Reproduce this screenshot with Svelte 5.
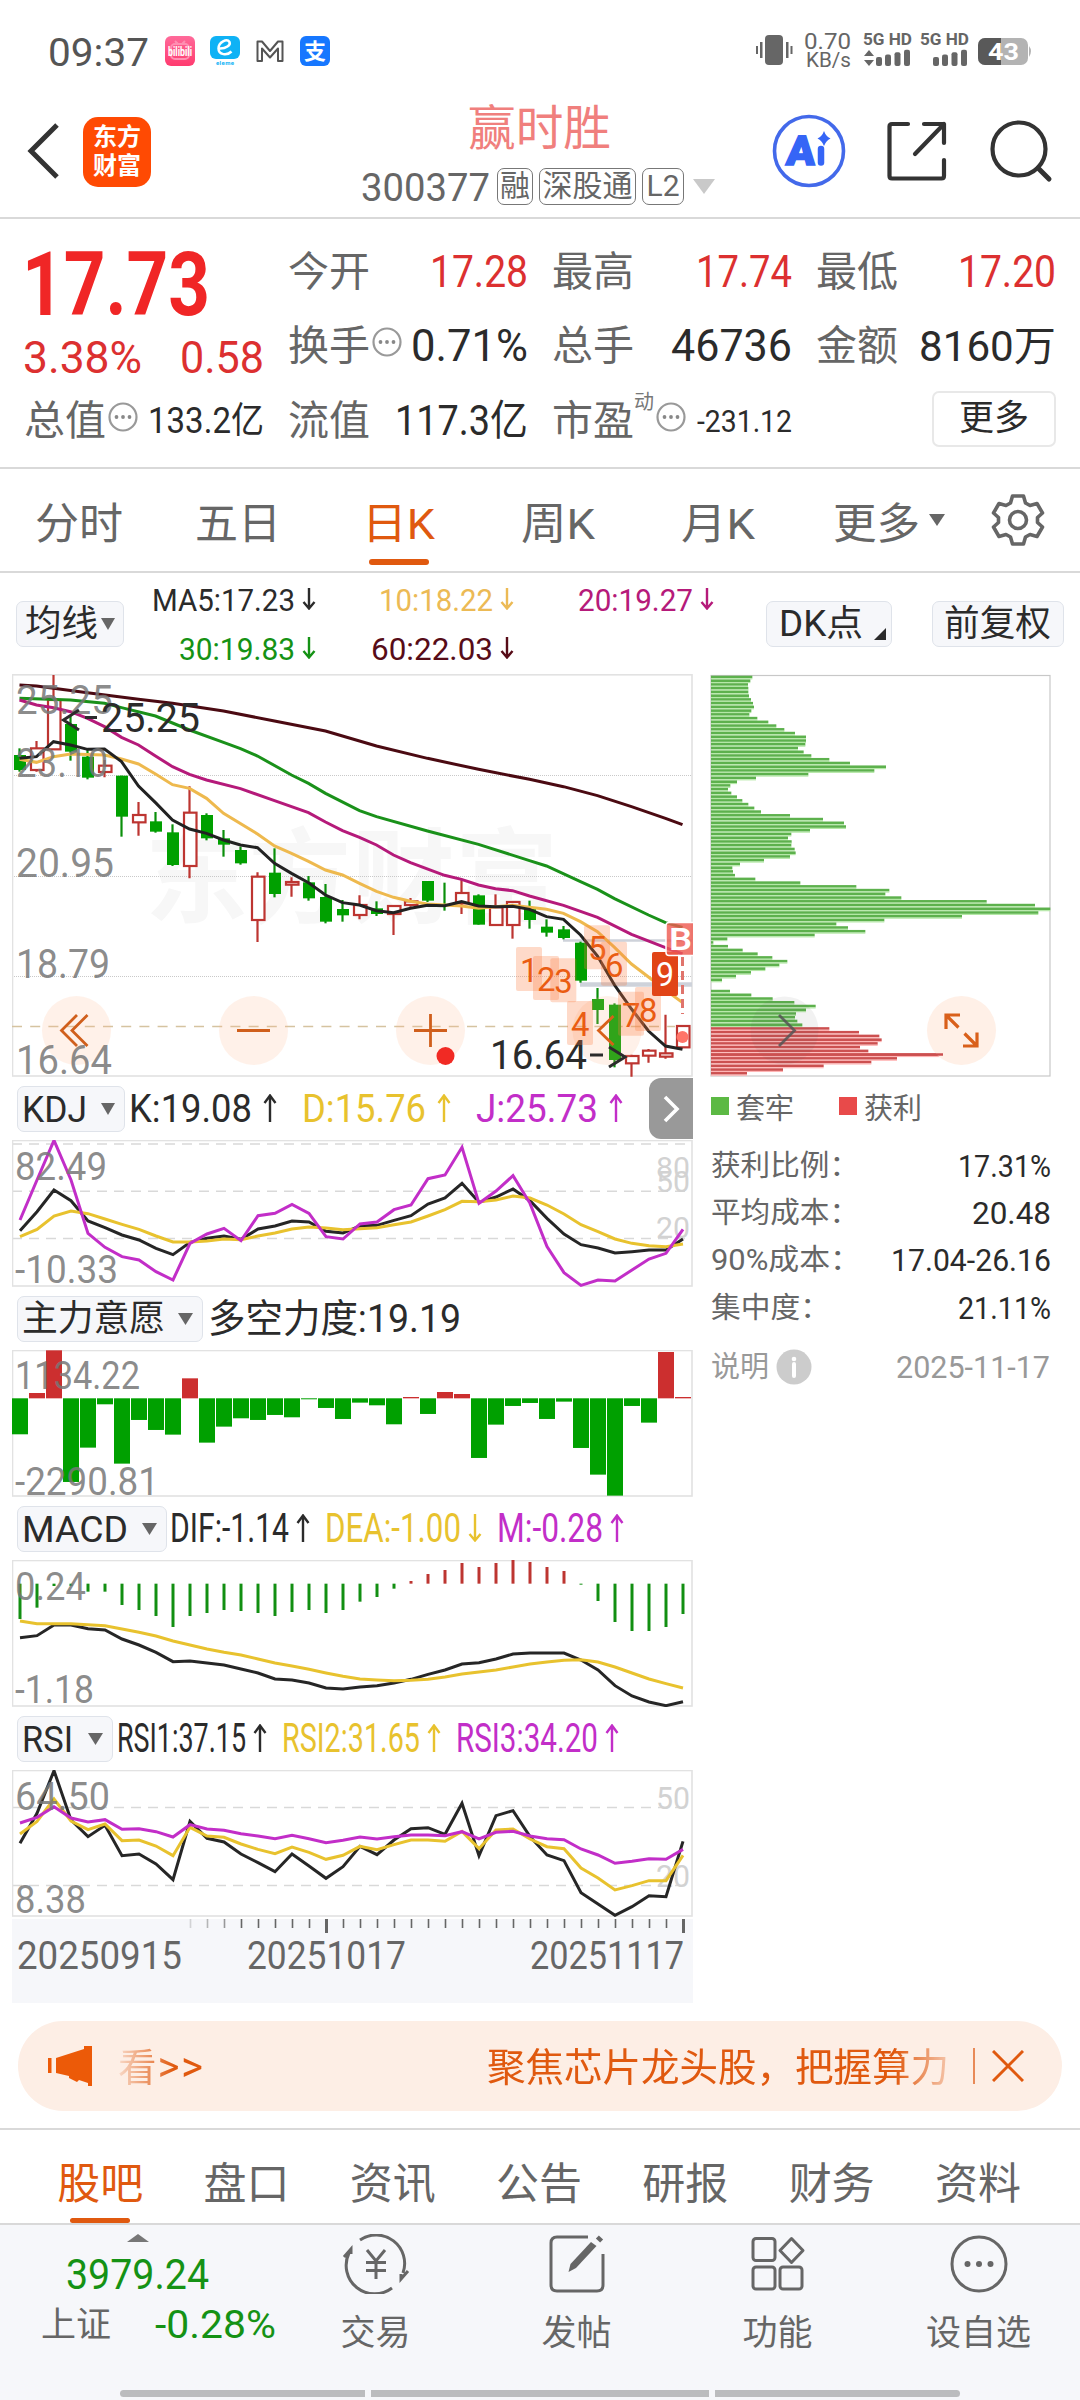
<script lang="ts">
  // Candles: [open/close top, open/close bottom, high, low, up?] in plot thirds
  const candles = [
    [285, 330, 265, 335, 0], [265, 330, 243, 335, 1], [120, 268, 45, 268, 1], [192, 275, 165, 302, 0],
    [290, 353, 270, 358, 0], [317, 336, 300, 352, 1], [347, 470, 347, 530, 0], [465, 487, 426, 527, 1],
    [484, 515, 456, 518, 0], [517, 615, 493, 618, 0], [458, 618, 379, 655, 1], [465, 535, 460, 541, 0],
    [535, 554, 510, 590, 0], [570, 610, 560, 614, 0], [650, 780, 637, 846, 1], [638, 702, 565, 712, 0],
    [666, 674, 652, 710, 1], [667, 715, 648, 722, 0], [711, 785, 672, 790, 0], [747, 766, 720, 785, 0],
    [735, 765, 706, 778, 1], [745, 762, 724, 768, 0], [738, 762, 735, 825, 1], [724, 735, 714, 740, 1],
    [663, 722, 663, 726, 0], [735, 738, 668, 752, 0], [699, 730, 660, 762, 1], [706, 794, 703, 794, 0],
    [742, 795, 703, 795, 1], [726, 795, 726, 836, 1], [745, 780, 722, 806, 0], [800, 818, 778, 830, 0],
    [808, 834, 798, 838, 0], [848, 962, 845, 968, 0], [1017, 1050, 984, 1092, 0], [1034, 1200, 1030, 1222, 0],
    [1188, 1210, 1184, 1250, 1], [1172, 1187, 1167, 1208, 1], [1180, 1190, 1064, 1196, 1], [1098, 1162, 1098, 1162, 1]
  ];

  // Moving averages: [index, y] pairs, same scale as the candles
  const averages = [
    { color: '#4b0a12', pts: [0, 75, 1, 78, 4, 98, 7, 118, 9, 130, 12, 153, 15, 183, 18, 213, 21, 258, 24, 295, 27, 328, 30, 358, 32, 380, 34, 407, 36, 440, 38, 475, 39, 494] },
    { color: '#1a911a', pts: [0, 115, 3, 120, 5, 130, 6, 143, 8, 168, 10, 210, 12, 247, 13, 266, 14, 288, 16, 345, 17, 370, 18, 400, 20, 452, 21, 470, 24, 513, 27, 553, 30, 602, 31, 618, 33, 665, 34, 688, 35, 716, 37, 765, 38, 788, 39, 802] },
    { color: '#b51a7a', pts: [0, 120, 1, 135, 2, 143, 3, 155, 4, 175, 5, 200, 6, 232, 7, 255, 8, 288, 9, 320, 10, 343, 11, 360, 13, 386, 15, 422, 17, 458, 18, 486, 19, 512, 20, 532, 21, 555, 22, 585, 23, 608, 25, 646, 26, 658, 27, 675, 28, 686, 29, 692, 30, 708, 32, 736, 34, 772, 36, 823, 38, 863, 39, 882] },
    { color: '#eeb94e', pts: [0, 298, 1, 307, 2, 290, 3, 282, 5, 285, 6, 297, 7, 312, 8, 342, 9, 374, 10, 385, 11, 415, 12, 460, 14, 522, 15, 558, 16, 580, 17, 604, 18, 630, 19, 645, 20, 670, 21, 694, 22, 712, 23, 724, 24, 732, 26, 738, 27, 745, 28, 740, 29, 736, 30, 742, 31, 748, 32, 760, 33, 785, 34, 815, 35, 862, 36, 912, 38, 990, 39, 1028] },
    { color: '#222', pts: [0, 295, 1, 290, 2, 245, 3, 255, 4, 268, 5, 267, 6, 305, 7, 378, 8, 428, 9, 480, 10, 507, 11, 520, 12, 540, 13, 555, 14, 563, 15, 610, 16, 640, 17, 668, 18, 705, 19, 728, 20, 735, 21, 752, 22, 758, 23, 745, 24, 736, 25, 737, 26, 725, 27, 738, 28, 740, 29, 739, 30, 748, 31, 770, 32, 778, 33, 825, 34, 888, 35, 975, 36, 1047, 37, 1113, 38, 1158, 39, 1168] }
  ];

  const kdj = [
    { color: '#262626', ys: [482, 425, 360, 392, 453, 473, 495, 510, 535, 554, 517, 505, 498, 508, 477, 468, 453, 456, 484, 489, 468, 466, 451, 437, 402, 384, 340, 397, 381, 357, 392, 445, 492, 524, 534, 549, 545, 540, 540, 507] },
    { color: '#e8c22e', ys: [500, 478, 438, 423, 431, 447, 463, 478, 498, 516, 516, 513, 507, 509, 498, 489, 477, 471, 474, 479, 476, 473, 464, 456, 438, 419, 394, 395, 390, 378, 384, 405, 432, 464, 485, 507, 520, 527, 530, 522] },
    { color: '#c22ec8', ys: [450, 330, 211, 330, 490, 532, 560, 570, 605, 630, 520, 492, 475, 512, 437, 430, 403, 430, 500, 507, 462, 456, 419, 405, 326, 315, 232, 400, 363, 317, 400, 530, 608, 646, 630, 633, 600, 567, 550, 478] }
  ];
  const force = [433, 309, 181, 576, 473, 343, 521, 390, 420, 434, 265, 458, 410, 385, 390, 375, 382, 328, 354, 387, 338, 346, 403, 321, 372, 306, 312, 504, 404, 348, 339, 387, 335, 474, 554, 617, 348, 398, 186, 321];
  const macdBars = [357, 323, 258, 258, 275, 275, 315, 330, 348, 381, 348, 339, 330, 333, 339, 348, 336, 330, 339, 330, 305, 291, 266, 243, 222, 210, 189, 201, 189, 180, 186, 201, 213, 254, 303, 366, 393, 393, 381, 342];
  const macd = [
    { color: '#262626', ys: [413, 407, 375, 375, 386, 390, 417, 435, 457, 485, 483, 489, 495, 507, 519, 537, 540, 549, 564, 567, 561, 557, 549, 538, 523, 510, 492, 488, 477, 462, 459, 459, 459, 480, 510, 557, 588, 606, 617, 605] },
    { color: '#e8c22e', ys: [363, 371, 371, 371, 374, 377, 387, 397, 408, 423, 435, 447, 457, 465, 477, 489, 498, 508, 519, 529, 537, 540, 542, 541, 538, 531, 522, 516, 510, 501, 492, 486, 481, 479, 486, 501, 519, 537, 551, 564] }
  ];
  const rsi = [
    { color: '#262626', ys: [310, 220, 92, 240, 290, 256, 347, 342, 372, 419, 244, 295, 306, 342, 368, 395, 342, 378, 415, 380, 319, 344, 300, 266, 263, 283, 190, 347, 227, 212, 290, 345, 362, 458, 492, 526, 500, 467, 470, 304] },
    { color: '#e8c22e', ys: [282, 244, 177, 243, 269, 252, 302, 300, 318, 347, 262, 288, 292, 312, 328, 341, 321, 337, 358, 346, 319, 329, 314, 300, 300, 304, 274, 326, 270, 267, 297, 320, 326, 384, 414, 450, 437, 422, 422, 346] },
    { color: '#c22ec8', ys: [249, 232, 200, 234, 246, 239, 268, 266, 275, 291, 254, 267, 271, 281, 288, 296, 286, 296, 308, 301, 291, 297, 290, 285, 285, 287, 275, 297, 277, 274, 288, 296, 299, 327, 345, 370, 364, 356, 358, 328] }
  ];

  // Cost distribution, one bar per price level; from CHIP_SPLIT on they are in profit
  const CHIP_SPLIT = 94;
  const chips = [
    186, 180, 173, 174, 174, 176, 182, 188, 191, 183, 177, 201, 234, 258, 282, 314, 347, 347, 345, 323, 340, 363, 417, 479, 587, 552,
    354, 197, 140, 120, 113, 123, 140, 156, 174, 192, 212, 299, 398, 461, 467, 359, 303, 293, 304, 303, 313, 316, 299, 221, 149, 126,
    128, 134, 195, 330, 498, 597, 585, 633, 889, 1034, 1080, 1044, 815, 582, 438, 473, 525, 373, 111, 69, 113, 157, 202, 246, 291,
    267, 225, 182, 137, 95, 62, 62, 119, 183, 247, 312, 376, 347, 317, 314, 321, 336,
    417, 506, 567, 574, 562, 509, 534, 759, 620, 543, 400, 278, 170
  ];

  const signals = [
    ['1', 498, 861], ['2', 549, 888], ['3', 601, 895], ['4', 651, 1023],
    ['5', 702, 796], ['6', 753, 845], ['7', 804, 995], ['8', 855, 981]
  ] as [string, number, number][];

  const periods = [
    { name: '分时', left: 35, w: 88 },
    { name: '五日', left: 195, w: 86 },
    { name: '日K', left: 362, w: 73, active: true },
    { name: '周K', left: 521, w: 74 },
    { name: '月K', left: 681, w: 74 },
    { name: '更多', left: 833, w: 87 }
  ];
  const sections = ['股吧', '盘口', '资讯', '公告', '研报', '财务', '资料'];
  const costs: [string, number, string, number][] = [
    ['获利比例：', 148, '17.31%', 93],
    ['平均成本：', 148, '20.48', 79],
    ['90%成本：', 150, '17.04-26.16', 160],
    ['集中度：', 119, '21.11%', 93]
  ];

  const cx = (i: number) => 19.5 + i * 17;
  const ky = (v: number) => 660 + v / 3;

  function pairs(p: number[]) {
    let out = '';
    for (let i = 0; i < p.length; i += 2) out += `${cx(p[i])},${ky(p[i + 1])} `;
    return out;
  }
  function line(ys: number[], base: number) {
    return ys.map((v, i) => `${cx(i) + 0.5},${base + v / 3}`).join(' ');
  }
</script>

<!-- text set to a fixed advance width, so the columns line up -->
{#snippet t(text: string, w: number, size: number, cls = '')}
  <svg class="t {cls}" width={w} height={Math.round(size * 1.2)}>
    <text x="0" y={Math.round(size * 1.2) / 2 + size * 0.36} font-size={size} textLength={w} lengthAdjust="spacingAndGlyphs">{text}</text>
  </svg>
{/snippet}

{#snippet arrow(up: boolean, h: number, cls: string)}
  <svg class="arrow {cls}" width="14" height={h} viewBox="0 0 14 {h}">
    {#if up}
      <path d="M7 {h}V2M1.5 9L7 1.5L12.500 9" />
    {:else}
      <path d="M7 0V{h - 2}M1.5 {h - 8}L7 {h - 1.5}L12.500 {h - 8}" />
    {/if}
  </svg>
{/snippet}

{#snippet caret(w: number, h: number)}
  <svg class="caret" width={w} height={h} viewBox="0 0 10 10" preserveAspectRatio="none"><path d="M0 0H10L5 10Z" /></svg>
{/snippet}

{#snippet more()}
  <svg class="more-dot" width="30" height="30" viewBox="0 0 30 30">
    <circle cx="15" cy="15" r="13.500" /><g class="dots"><circle cx="8.500" cy="15" r="1.900" /><circle cx="15" cy="15" r="1.900" /><circle cx="21.500" cy="15" r="1.900" /></g>
  </svg>
{/snippet}

{#snippet axis(text: string, x: number, y: number, w: number, size = 39)}
  <text class="axis" {x} {y} font-size={size} textLength={w} lengthAdjust="spacingAndGlyphs">{text}</text>
{/snippet}

<div class="page">
  <div class="status">
    {@render t('09:37', 101, 39, 'mid')}
    <svg class="apps" width="168" height="34" viewBox="163 34 168 34">
      <defs>
        <linearGradient id="pink" x1="0" y1="0" x2="0" y2="1"><stop offset="0" stop-color="#ff6a9a" /><stop offset="1" stop-color="#ff3b6f" /></linearGradient>
      </defs>
      <rect x="165" y="36" width="30" height="30" rx="6" fill="url(#pink)" />
      <rect x="171" y="44" width="18" height="15" rx="4" fill="none" stroke="#ff8fb2" stroke-width="2" /><path d="M175 41l3 3M185 41l-3 3" stroke="#ff8fb2" stroke-width="2" />
      <text x="168" y="56" font-size="12" font-weight="700" fill="#fff" textLength="24" lengthAdjust="spacingAndGlyphs">bilibili</text>
      <rect x="210" y="36" width="30" height="23" rx="6" fill="#0fb2f5" />
      <path d="M219 48.500C226 49 231 45 229.500 42C227 38 218.500 42 218.500 48.500C218.500 55 227 56 231.500 51.500" fill="none" stroke="#fff" stroke-width="2.500" />
      <text x="216" y="65" font-size="6" font-weight="700" fill="#0fb2f5" textLength="18">eleme</text>
      <path d="M257.500 61V41.500H262L270 51L278 41.500H282.500V61H278V48.500L270 57.500L262 48.500V61Z" fill="none" stroke="#555" stroke-width="2" stroke-linejoin="round" />
      <rect x="300" y="36" width="30" height="30" rx="6" fill="#1677ff" />
      <text x="304" y="59" font-size="22" font-weight="700" fill="#fff">支</text>
    </svg>
    <svg class="system" width="280" height="44" viewBox="755 30 280 44">
      <g fill="#666">
        <rect x="765" y="36" width="18" height="30" rx="4" /><rect x="760" y="43" width="2.500" height="16" /><rect x="756" y="47" width="2" height="8" /><rect x="786" y="43" width="2.500" height="16" /><rect x="790.500" y="47" width="2" height="8" />
        <text x="804" y="50" font-size="22" textLength="47" lengthAdjust="spacingAndGlyphs">0.70</text>
        <text x="806" y="68" font-size="20" textLength="45" lengthAdjust="spacingAndGlyphs">KB/s</text>
        <text x="863" y="46" font-size="17" font-weight="700" textLength="49" lengthAdjust="spacingAndGlyphs">5G HD</text>
        <text x="920" y="46" font-size="17" font-weight="700" textLength="49" lengthAdjust="spacingAndGlyphs">5G HD</text>
        <path d="M864 57L869 51L874 57ZM864 61H874L869 67Z" />
        {#each [876, 885, 894.5, 904] as x, i}
          <rect {x} y={58 - i * 2.4} width="6" height={9 + i * 2.4} rx="2" />
          <rect x={x + 57} y={58 - i * 2.4} width="6" height={9 + i * 2.4} rx="2" />
        {/each}
      </g>
      <rect x="978" y="39" width="50" height="27" rx="7" fill="#b3b3b3" /><path d="M985 39H1001V66H985A7 7 0 0 1 978 59V46A7 7 0 0 1 985 39Z" fill="#595959" /><path d="M1029 47Q1033 52 1029 58Z" fill="#b3b3b3" />
      <text x="988" y="61" font-size="24" font-weight="700" fill="#fff" textLength="31" lengthAdjust="spacingAndGlyphs">43</text>
    </svg>
  </div>

  <header>
    <svg class="back" width="36" height="60" viewBox="0 0 36 60"><path d="M31 4L5 30L31 56" /></svg>
    <div class="logo"><span>东方</span><span>财富</span></div>
    <div class="title">
      {@render t('赢时胜', 143, 48, 'rose')}
      <div class="code">
        {@render t('300377', 129, 39, 'grey')}
        <span class="tag" style:width="36px">融</span>
        <span class="tag" style:width="97px">深股通</span>
        <span class="tag" style:width="42px">L2</span>
        <span class="pale">{@render caret(22, 15)}</span>
      </div>
    </div>
    <svg class="tools" width="284" height="80" viewBox="770 111 284 80">
      <circle cx="809" cy="151" r="34.500" fill="none" stroke="#4369ea" stroke-width="3.600" />
      <text x="786" y="165" font-size="41" font-weight="900" fill="#3565f6" stroke="#3565f6" stroke-width="1.500" textLength="29" lengthAdjust="spacingAndGlyphs" transform="skewX(-4) translate(11 0)">A</text>
      <path d="M821 149V162.500" stroke="#3565f6" stroke-width="6.500" stroke-linecap="round" /><path d="M824 131Q826 136.500 830.500 138.500Q826 140.500 824 146Q822 140.500 817.500 138.500Q822 136.500 824 131Z" fill="#3565f6" />
      <g fill="none" stroke="#333" stroke-width="4.200" stroke-linecap="round" stroke-linejoin="round">
        <path d="M908 124H892Q889.500 124 889.500 126.500V176Q889.500 178.500 892 178.500H941.500Q944 178.500 944 176V160" /><path d="M924 124H944V143M944 124L915 154" />
        <circle cx="1019" cy="149" r="26.500" /><path d="M1038 168L1049 179" stroke-width="5" />
      </g>
    </svg>
  </header>

  <section class="quote">
    <div class="price">
      {@render t('17.73', 188, 89, 'red big')}
      <div class="pair">{@render t('3.38%', 119, 44, 'red2')}{@render t('0.58', 84, 44, 'red2')}</div>
    </div>
    <div class="cell">{@render t('今开', 82, 41, 'grey')}{@render t('17.28', 98, 44, 'red2')}</div>
    <div class="cell">{@render t('最高', 82, 41, 'grey')}{@render t('17.74', 96, 44, 'red2')}</div>
    <div class="cell">{@render t('最低', 82, 41, 'grey')}{@render t('17.20', 98, 44, 'red2')}</div>
    <div class="cell"><span class="lab">{@render t('换手', 82, 41, 'grey')}{@render more()}</span>{@render t('0.71%', 117, 44)}</div>
    <div class="cell">{@render t('总手', 82, 41, 'grey')}{@render t('46736', 121, 44)}</div>
    <div class="cell">{@render t('金额', 82, 41, 'grey')}{@render t('8160万', 137, 42)}</div>
    <div class="cell"><span class="lab">{@render t('总值', 82, 41, 'grey')}{@render more()}</span>{@render t('133.2亿', 116, 36)}</div>
    <div class="cell">{@render t('流值', 82, 41, 'grey')}{@render t('117.3亿', 133, 42)}</div>
    <div class="cell"><span class="lab">{@render t('市盈', 82, 41, 'grey')}<sup>动</sup>{@render more()}</span>{@render t('-231.12', 95, 31)}</div>
    <div class="cell end"><button class="more">更多</button></div>
  </section>

  <nav class="periods">
    {#each periods as p, i}
      <div class="period" class:active={p.active} style:margin-left="{i ? p.left - periods[i - 1].left - periods[i - 1].w : p.left}px">
        {@render t(p.name, p.w, 43)}
      </div>
    {/each}
    <span class="drop">{@render caret(16, 12)}</span>
    <svg class="gear" width="54" height="54" viewBox="-27 -27 54 54">
      <path d="M-5.500 -24H5.500L7.500 -17L12 -14.500L19 -16.500L24.500 -7L19.500 -2.500V2.500L24.500 7L19 16.500L12 14.500L7.500 17L5.500 24H-5.500L-7.500 17L-12 14.500L-19 16.500L-24.500 7L-19.500 2.500V-2.500L-24.500 -7L-19 -16.500L-12 -14.500L-7.500 -17Z" /><circle r="8.500" />
    </svg>
  </nav>

  <section class="averages">
    <button class="chip" style:width="108px">{@render t('均线', 73, 36)}{@render caret(14, 12)}</button>
    <div class="legend">
      <span>{@render t('MA5:17.23', 143, 31)}{@render arrow(false, 22, 'ink')}</span>
      <span>{@render t('10:18.22', 114, 31, 'amber')}{@render arrow(false, 22, 'amber')}</span>
      <span>{@render t('20:19.27', 115, 31, 'plum')}{@render arrow(false, 22, 'plum')}</span>
      <span>{@render t('30:19.83', 116, 31, 'green')}{@render arrow(false, 22, 'green')}</span>
      <span>{@render t('60:22.03', 122, 31, 'wine')}{@render arrow(false, 22, 'wine')}</span>
    </div>
    <button class="chip dk" style:width="126px">{@render t('DK点', 84, 36)}<i></i></button>
    <button class="chip" style:width="132px">{@render t('前复权', 107, 36)}</button>
  </section>

  <main>
    <div class="charts">
      <svg class="plot" width="681" height="403" viewBox="12 674 681 403">
        <text class="mark" x="145" y="915" font-size="103" textLength="413">东方财富</text>
        <g class="dotted"><path d="M12 775.500H692M12 876.500H692M12 976.500H692" /></g>
        <rect class="frame" x="12.500" y="674.800" width="679.500" height="401.200" />
        <path d="M12 1026.500H675" fill="none" stroke="#d5c3a0" stroke-width="1.600" stroke-dasharray="10 8.200" />
        <path d="M563 940.500H692" stroke="#ced2da" stroke-width="2.500" /><path d="M580 984.500H692" stroke="#ced2da" stroke-width="4.500" />
        {#each candles as [top, bottom, high, low, up], i}
          {#if up}
            <path d="M{cx(i)} {ky(high)}V{ky(top)}M{cx(i)} {ky(bottom)}V{ky(low)}" stroke="#bd3531" stroke-width="2.200" />
            <rect x={cx(i) - 5.5} y={ky(top)} width="12.500" height={(bottom - top) / 3} fill="#fff" stroke="#bd3531" stroke-width="2.200" />
          {:else}
            <path d="M{cx(i)} {ky(high)}V{ky(low)}" stroke="#0a8f0a" stroke-width="2.200" />
            <rect x={cx(i) - 5.5} y={ky(top)} width="12" height={(bottom - top) / 3} fill="#00a000" />
          {/if}
        {/each}
        {#each averages as a}
          <polyline points={pairs(a.pts)} fill="none" stroke={a.color} stroke-width="3" />
        {/each}
        {@render axis('25.25', 16, 714, 97, 40)}
        {@render axis('23.10', 16, 777, 92, 40)}
        {@render axis('20.95', 16, 877, 98, 40)}
        {@render axis('18.79', 16, 978, 94, 40)}
        <g fill="#ffb48a" fill-opacity="0.190"><circle cx="76.500" cy="1030.500" r="34.500" /><circle cx="253.500" cy="1030.500" r="34.500" /><circle cx="430.500" cy="1030.500" r="34.500" /><circle cx="607" cy="1030.500" r="34.500" /></g>
        {@render axis('16.64', 16, 1074, 96, 40)}
        <path d="M77 1015L61.500 1030.500L77 1046M87.500 1015L72 1030.500L87.500 1046M237 1030.500H270M414 1030.500H447M430.500 1014V1047" fill="none" stroke="#d05f1c" stroke-width="2.800" />
        <circle cx="445.500" cy="1056" r="9" fill="#f12a24" />
        <g class="callout">
          <path d="M79 710L63.500 720L79 730M85 717.500H97M609 1047L625 1057L609 1067M590 1055H603" />
          <text x="101" y="732" font-size="40" textLength="99" lengthAdjust="spacingAndGlyphs">25.25</text>
          <text x="490" y="1069" font-size="40" textLength="97" lengthAdjust="spacingAndGlyphs">16.64</text>
        </g>
        {#each signals as [n, x, y]}
          <rect x={350 + x / 3} y={ky(y)} width="26" height="44" rx="2" fill="#fb7a3c" fill-opacity="0.280" />
          <text x={354 + x / 3} y={ky(y) + 35} font-size="34" fill="#ea5c12" textLength="18.500" lengthAdjust="spacingAndGlyphs">{n}</text>
        {/each}
        <path d="M613.500 1016L598.500 1030.500L613.500 1045" fill="none" stroke="#d86018" stroke-width="2.800" />
        <rect x="652" y="952" width="26" height="44" rx="2" fill="#e14417" /><text x="656" y="986" font-size="34" fill="#fff" textLength="18" lengthAdjust="spacingAndGlyphs">9</text>
        <path d="M682.500 957V1014" stroke="#e0746c" stroke-width="3" stroke-dasharray="9 5" /><circle cx="682.500" cy="1037" r="6" fill="#ff7468" />
        <rect x="666" y="922.500" width="30" height="33" rx="3" fill="#ee5b52" fill-opacity="0.820" stroke="#fff" stroke-width="1.500" /><text x="669" y="950" font-size="31" font-weight="600" fill="#fff" textLength="23" lengthAdjust="spacingAndGlyphs">B</text>
      </svg>

      <div class="indicator wide">
        <button class="chip" style:width="108px">{@render t('KDJ', 65, 37)}{@render caret(14, 12)}</button>
        <span style:margin-left="4px">{@render t('K:19.08', 123, 39)}{@render arrow(true, 28, 'ink')}</span>
        <span>{@render t('D:15.76', 124, 39, 'yellow')}{@render arrow(true, 28, 'yellow')}</span>
        <span>{@render t('J:25.73', 122, 39, 'purple')}{@render arrow(true, 28, 'purple')}</span>
        <div class="expand"><svg width="18" height="28" viewBox="0 0 18 28"><path d="M3 2L15 14L3 26" /></svg></div>
      </div>
      <svg class="plot" width="681" height="147" viewBox="12 1140 681 147">
        <path class="dashed" d="M12 1144H692M12 1191.300H692M12 1238.500H692" />
        <rect class="frame" x="12.500" y="1140.500" width="679.500" height="145.500" />
        <g class="faint">
          <text x="656" y="1178" font-size="29" textLength="34" lengthAdjust="spacingAndGlyphs">80</text>
          <text x="656" y="1192" font-size="29" textLength="34" lengthAdjust="spacingAndGlyphs">50</text>
          <text x="656" y="1238" font-size="29" textLength="34" lengthAdjust="spacingAndGlyphs">20</text>
        </g>
        {#each kdj as l}<polyline points={line(l.ys, 1070)} fill="none" stroke={l.color} stroke-width="3" />{/each}
        {@render axis('82.49', 15, 1180, 92, 38)}
        {@render axis('-10.33', 15, 1283, 103, 38)}
      </svg>

      <div class="indicator">
        <button class="chip" style:width="186px">{@render t('主力意愿', 143, 36)}{@render caret(15, 12)}</button>
        <span style:margin-left="5px">{@render t('多空力度:19.19', 253, 39)}</span>
      </div>
      <svg class="plot" width="681" height="147" viewBox="12 1350 681 147">
        <rect class="frame" x="12.500" y="1350.500" width="679.500" height="145.500" />
        {#each force as v, i}
          <rect x={12 + i * 17} y={Math.min(1290 + v / 3, 1398.3)} width="16" height={Math.max(Math.abs(v - 325) / 3, 1)} fill={v < 325 ? '#cc2f2f' : '#00a000'} />
        {/each}
        {@render axis('1134.22', 15, 1389, 125, 38)}
        {@render axis('-2290.81', 15, 1495, 144, 38)}
      </svg>

      <div class="indicator">
        <button class="chip" style:width="150px">{@render t('MACD', 106, 37)}{@render caret(15, 12)}</button>
        <span style:margin-left="3px">{@render t('DIF:-1.14', 119, 40)}{@render arrow(true, 28, 'ink')}</span>
        <span>{@render t('DEA:-1.00', 136, 40, 'yellow')}{@render arrow(false, 28, 'yellow')}</span>
        <span>{@render t('M:-0.28', 106, 40, 'purple')}{@render arrow(true, 28, 'purple')}</span>
      </div>
      <svg class="plot" width="681" height="147" viewBox="12 1560 681 147">
        <rect class="frame" x="12.500" y="1560.500" width="679.500" height="145.500" />
        {#each macdBars as v, i}
          <path d="M{cx(i) + 0.5} {1500 + 251 / 3}V{1500 + v / 3}" stroke={v < 251 ? '#bd3531' : '#128f12'} stroke-width="3" />
        {/each}
        {#each macd as l}<polyline points={line(l.ys, 1500)} fill="none" stroke={l.color} stroke-width="3" />{/each}
        {@render axis('0.24', 15, 1600, 71, 38)}
        {@render axis('-1.18', 15, 1703, 79, 38)}
      </svg>

      <div class="indicator">
        <button class="chip" style:width="96px">{@render t('RSI', 51, 37)}{@render caret(15, 12)}</button>
        <span style:margin-left="4px">{@render t('RSI1:37.15', 129, 40)}{@render arrow(true, 28, 'ink')}</span>
        <span>{@render t('RSI2:31.65', 138, 40, 'yellow')}{@render arrow(true, 28, 'yellow')}</span>
        <span>{@render t('RSI3:34.20', 142, 40, 'purple')}{@render arrow(true, 28, 'purple')}</span>
      </div>
      <svg class="plot" width="681" height="147" viewBox="12 1770 681 147">
        <path class="dashed" d="M12 1807.500H692M12 1885.500H692" />
        <rect class="frame" x="12.500" y="1770.500" width="679.500" height="145.500" />
        <g class="faint">
          <text x="656" y="1809" font-size="31" textLength="34" lengthAdjust="spacingAndGlyphs">50</text>
          <text x="656" y="1887" font-size="31" textLength="34" lengthAdjust="spacingAndGlyphs">20</text>
        </g>
        {#each rsi as l}<polyline points={line(l.ys, 1740)} fill="none" stroke={l.color} stroke-width="3" />{/each}
        {@render axis('64.50', 15, 1810, 95, 38)}
        {@render axis('8.38', 15, 1913, 71, 38)}
      </svg>
      <svg class="plot days" width="681" height="84" viewBox="12 1919 681 84">
        {#each Array(30) as _, k}
          {@const i = k + 10}
          {@const major = i === 18 || i === 39}
          <path d="M{cx(i) + 1} 1919V{major ? 1933 : 1928}" stroke="#666" stroke-opacity={k < 3 ? 0.25 + k * 0.2 : 1} stroke-width={major ? 3 : 1.6} />
        {/each}
        <g fill="#666">
          <text x="17" y="1968.500" font-size="38" textLength="165" lengthAdjust="spacingAndGlyphs">20250915</text>
          <text x="247" y="1968.500" font-size="38" textLength="159" lengthAdjust="spacingAndGlyphs">20251017</text>
          <text x="530" y="1968.500" font-size="38" textLength="154" lengthAdjust="spacingAndGlyphs">20251117</text>
        </g>
      </svg>
    </div>

    <aside>
      <svg width="342" height="403" viewBox="710 674 342 403">
        <rect x="711" y="675.500" width="339" height="400.500" fill="none" stroke="#c8c8c8" stroke-width="1.200" />
        {#each chips as v, i}
          <rect x="711" y={675.7 + i * 3.739} width={(v - 62) / 3} height="2.600" fill={i < CHIP_SPLIT ? '#5db14d' : '#cc5050'} />
          <rect x="711" y={678.3 + i * 3.739} width={(v - 62) / 3} height="1.139" fill={i < CHIP_SPLIT ? '#b4e8a6' : '#ffb5b5'} />
        {/each}
        <circle cx="784.500" cy="1030.500" r="34" fill="#555" fill-opacity="0.080" /><path d="M779 1015L794.500 1030.500L779 1046" fill="none" stroke="#555" stroke-width="2.800" stroke-opacity="0.850" />
        <circle cx="961.500" cy="1030.500" r="34.500" fill="#fff0e7" />
        <path d="M711 1054.500H943" stroke="#cc5050" stroke-width="2.600" />
        <path d="M946 1029V1015H960M947 1016L958.500 1027.500M977 1032.500V1046H963M976 1045L964.500 1033.500" fill="none" stroke="#d9601b" stroke-width="3.200" />
      </svg>
      <div class="key"><i class="k1"></i><span>套牢</span><i class="k2"></i><span>获利</span></div>
      <dl>
        {#each costs as [name, nw, value, vw]}
          <div><dt>{@render t(name, nw, 29, 'grey')}</dt><dd>{@render t(value, vw, 31)}</dd></div>
        {/each}
      </dl>
      <div class="note">
        {@render t('说明', 58, 29, 'light')}
        <svg width="36" height="36" viewBox="0 0 36 36"><circle cx="18" cy="18" r="17.500" fill="#ccc" /><circle cx="18" cy="10" r="2.300" fill="#fff" /><path d="M18 15V27" stroke="#fff" stroke-width="4" stroke-linecap="round" /></svg>
        <span>{@render t('2025-11-17', 154, 31, 'light')}</span>
      </div>
    </aside>
  </main>

  <div class="banner">
    <svg width="46" height="42" viewBox="0 0 46 42"><path d="M1 13H4.500V28H1ZM9 13L37 4V1H45V41H41V38L32 35L30 37L22 33V31L9 28Z" fill="#ec5a08" /></svg>
    <div class="ticker"><span>看<b>&gt;&gt;</b></span><span>聚焦芯片龙头股，把握算力</span></div>
    <i></i>
    <svg width="32" height="32" viewBox="0 0 32 32"><path d="M1 1L31 31M31 1L1 31" stroke="#e0590f" stroke-width="3" /></svg>
  </div>

  <nav class="sections">
    {#each sections as s, i}
      <div class:active={i === 0}>{s}</div>
    {/each}
  </nav>

  <footer>
    <div class="dock">
      <div class="index">
        <svg width="22" height="8" viewBox="0 0 22 8"><path d="M0 8L11 0L22 8Z" fill="#777" /></svg>
        {@render t('3979.24', 143, 42, 'green')}
        <div>{@render t('上证', 70, 35, 'grey')}{@render t('-0.28%', 121, 39, 'green')}</div>
      </div>
      <div class="action">
        <svg width="70" height="60" viewBox="-35 -30 70 60">
          <path d="M-16 -24A28.500 28.500 0 0 1 27 9M16 24A28.500 28.500 0 0 1 -27 -11M-32 -7L-25 -15V-10M32 7L25 15V10" /><path d="M-9 -14L0 -3L9 -14M0 -3V15M-10 -1.500H10M-10 6.500H10" />
        </svg>
        <span>交易</span>
      </div>
      <div class="action">
        <svg width="70" height="60" viewBox="-35 -30 70 60">
          <path d="M11 -27H-20Q-26 -27 -26 -21V21Q-26 27 -20 27H20Q26 27 26 21V-10" /><path d="M-8.500 8L-6.500 0L14 -22L19.500 -18L-1 4Z" fill="#666" stroke="none" /><path d="M21 -23.500L24 -26.500" stroke-width="6" />
        </svg>
        <span>发帖</span>
      </div>
      <div class="action">
        <svg width="70" height="60" viewBox="-35 -30 70 60">
          <rect x="-25" y="-25.500" width="22" height="22" rx="3" /><rect x="-25" y="3" width="22" height="22" rx="3" /><rect x="2" y="3" width="22" height="22" rx="3" /><path d="M13.500 -25.500L25 -13.500L13.500 -1.500L2 -13.500Z" stroke-linejoin="round" />
        </svg>
        <span>功能</span>
      </div>
      <div class="action">
        <svg width="70" height="60" viewBox="-35 -30 70 60">
          <circle r="27" /><g class="dots"><circle cx="-11.500" r="3" /><circle r="3" /><circle cx="11.500" r="3" /></g>
        </svg>
        <span>设自选</span>
      </div>
    </div>
    <div class="gesture"><i></i><i></i><i></i></div>
  </footer>
</div>

<style>
  :global(body) {
    background: #fff;
  }
  .page {
    width: 1080px;
    height: 2400px;
    overflow: hidden;
    display: flex;
    flex-direction: column;
    font-family: Roboto, "Noto Sans CJK SC", sans-serif;
    color: #2b2b2b;
    --orange: #e0590f;
    --panel: #f6f7fa;
  }
  .page * {
    box-sizing: border-box;
  }
  svg {
    display: block;
    flex: none;
  }
  button {
    font: inherit;
    color: inherit;
    padding: 0;
  }
  .t {
    fill: #2b2b2b;
    overflow: visible;
  }
  .mid { fill: #555; }
  .grey { fill: #666; }
  .light { fill: #999; }
  .rose { fill: #f07f7d; }
  .red { fill: #f02626; }
  .red2 { fill: #dc3030; }
  .big { font-weight: 700; }
  .amber { fill: #ecba55; stroke: #ecba55; }
  .plum { fill: #b51a7a; stroke: #b51a7a; }
  .green { fill: #159215; stroke: #159215; }
  .wine { fill: #570c18; stroke: #570c18; }
  .yellow { fill: #e8c22e; stroke: #e8c22e; }
  .purple { fill: #c22ec8; stroke: #c22ec8; }
  .ink { stroke: #2b2b2b; }
  .t.amber, .t.plum, .t.green, .t.wine, .t.yellow, .t.purple { stroke: none; }
  .arrow path {
    fill: none;
    stroke-width: 2.4;
  }
  .caret { fill: #666; }
  .more-dot > circle {
    fill: none;
    stroke: #999;
    stroke-width: 2.2;
  }
  .more-dot .dots { fill: #888; }

  .status {
    height: 90px;
    display: flex;
    align-items: center;
    padding: 12px 45px 0 48px;
  }
  .apps { margin-left: 14px; }
  .system { margin-left: auto; }

  header {
    height: 129px;
    border-bottom: 2px solid #d9d9d9;
    display: flex;
    align-items: flex-start;
    padding: 0 26px 0 26px;
  }
  .back {
    margin-top: 31px;
    fill: none;
    stroke: #333;
    stroke-width: 5;
  }
  .logo {
    width: 68px;
    height: 70px;
    margin: 27px 0 0 21px;
    border-radius: 15px;
    background: #ff4a03;
    color: #fff;
    font-size: 24px;
    font-weight: 700;
    line-height: 29px;
    display: flex;
    flex-direction: column;
    align-items: center;
    justify-content: center;
  }
  .title {
    width: 354px;
    margin-left: 210px;
    display: flex;
    flex-direction: column;
    align-items: center;
    padding-top: 9px;
  }
  .title .rose { margin-left: 3px; }
  .code {
    width: 354px;
    height: 40px;
    margin-top: 9px;
    display: flex;
    align-items: center;
  }
  .code .t { margin-right: 7px; }
  .tag {
    height: 37px;
    margin-right: 6px;
    border: 1.5px solid #777;
    border-radius: 7px;
    color: #666;
    font-size: 30px;
    line-height: 33px;
    text-align: center;
    white-space: nowrap;
  }
  .pale { margin-left: 3px; }
  .pale .caret { fill: #c9c9c9; }
  .tools {
    margin: 21px 0 0 auto;
  }

  .quote {
    height: 250px;
    border-bottom: 2px solid #d9d9d9;
    padding: 15px 26px 0;
    display: grid;
    grid-template-columns: repeat(4, 236px);
    grid-template-rows: repeat(3, 74.5px);
    column-gap: 28px;
  }
  .price {
    grid-row: span 2;
    padding-top: 0;
  }
  .price .big { margin: -5px 0 0 -4px; }
  .pair {
    display: flex;
    justify-content: space-between;
    margin: -5px -2px 0 -3px;
  }
  .cell {
    display: flex;
    align-items: center;
    justify-content: space-between;
    margin: 0 -2px;
  }
  .cell.end { justify-content: flex-end; }
  .lab {
    display: flex;
    align-items: center;
  }
  .lab .more-dot {
    margin: -7px 0 0 2px;
  }
  sup {
    font-size: 20px;
    line-height: 20px;
    color: #777;
    align-self: flex-start;
    margin-top: -4px;
  }
  .more {
    width: 124px;
    height: 56px;
    margin-top: -3px;
    border: 2px solid #e8e8e8;
    border-radius: 7px;
    background: #fff;
    font-size: 35px;
    line-height: 50px;
  }

  .periods {
    height: 104px;
    border-bottom: 2px solid #d9d9d9;
    display: flex;
    align-items: center;
  }
  .period {
    height: 102px;
    display: flex;
    flex-direction: column;
    align-items: center;
    padding-top: 29px;
  }
  .period .t { fill: #666; }
  .period.active .t { fill: var(--orange); }
  .period.active::after {
    content: "";
    width: 60px;
    height: 6px;
    margin-top: 9px;
    border-radius: 3px;
    background: var(--orange);
  }
  .drop { margin-left: 9px; }
  .gear {
    margin-left: 46px;
    fill: none;
    stroke: #666;
    stroke-width: 3.6;
    stroke-linejoin: round;
  }

  .averages {
    height: 101px;
    display: flex;
    align-items: center;
    padding: 0 16px;
  }
  .chip {
    flex: none;
    height: 46px;
    border: 1.5px solid #dfe3ea;
    border-radius: 7px;
    background: #f6f7fa;
    display: flex;
    align-items: center;
    justify-content: space-between;
    padding: 0 8px;
  }
  .legend {
    flex: 1;
    display: grid;
    grid-template-columns: 192px 198px 200px;
    grid-template-rows: 49px 49px;
  }
  .legend span {
    display: flex;
    align-items: center;
    justify-content: flex-end;
    gap: 7px;
  }
  .averages .chip:last-child { margin-left: 40px; padding: 0 11px; }
  .averages .dk { padding: 0 5px 0 12px; }
  .dk i {
    align-self: flex-end;
    margin-bottom: 6px;
    border: solid transparent;
    border-width: 0 0 12px 12px;
    border-bottom-color: #2b2b2b;
  }

  main {
    height: 1329px;
    display: flex;
    padding-left: 12px;
  }
  .charts { width: 681px; }
  .frame {
    fill: none;
    stroke: #e2e2e2;
    stroke-width: 1.6;
  }
  .mark {
    fill: #f7f7f7;
    font-weight: 700;
  }
  .dotted path {
    fill: none;
    stroke: #c9c9c9;
    stroke-width: 1;
    stroke-dasharray: 1 1;
  }
  .dashed {
    fill: none;
    stroke: #d9d9d9;
    stroke-width: 1.6;
    stroke-dasharray: 10 7;
  }
  .axis {
    fill: #777;
    fill-opacity: 0.85;
  }
  .faint { fill: #d2d2d2; }
  .callout { fill: #2b2b2b; }
  .callout path {
    fill: none;
    stroke: #2b2b2b;
    stroke-width: 3;
  }
  .indicator {
    height: 63px;
    display: flex;
    align-items: center;
    padding-left: 5px;
  }
  .indicator .chip { padding: 0 9px 0 4px; }
  .indicator > span {
    display: flex;
    align-items: center;
    gap: 7px;
    margin: -2px 15px 0 0;
  }
  .indicator.wide > span {
    gap: 11px;
    margin-right: 25px;
  }
  .expand {
    width: 44px;
    height: 61px;
    margin-left: auto;
    border-radius: 12px 0 0 12px;
    background: #999;
    display: flex;
    align-items: center;
    justify-content: center;
  }
  .expand path {
    fill: none;
    stroke: #fff;
    stroke-width: 3.6;
  }
  .days {
    margin-top: 2px;
    background: var(--panel);
  }

  aside {
    width: 342px;
    margin-left: 17px;
  }
  .key {
    height: 59px;
    display: flex;
    align-items: center;
    padding: 0 0 2px 1px;
    color: #666;
    font-size: 29px;
  }
  .key i {
    width: 18px;
    height: 18px;
    margin-right: 7px;
  }
  .key .k1 { background: #5cb944; }
  .key .k2 { background: #e84a4a; margin-left: 45px; }
  dl {
    margin: 6px 0 -1px;
    padding: 0 1px 0 1px;
  }
  dl div {
    height: 47.2px;
    display: flex;
    align-items: center;
    justify-content: space-between;
  }
  dd { margin: 0; }
  .note {
    height: 70px;
    display: flex;
    align-items: center;
    gap: 7px;
    padding: 4px 2px 0 1px;
  }
  .note span { margin-left: auto; }

  .banner {
    flex: none;
    width: 1044px;
    height: 90px;
    margin: 18px 18px 17px;
    padding: 0 38px 0 29px;
    border-radius: 45px;
    background: #fdeee5;
    color: var(--orange);
    font-size: 38.5px;
    display: flex;
    align-items: center;
  }
  .ticker {
    width: 850px;
    margin: -4px 0 0 11px;
    padding-left: 14px;
    display: flex;
    justify-content: space-between;
    white-space: nowrap;
    mask-image: linear-gradient(90deg, transparent 5px, #000 70px, #000 790px, transparent 865px);
  }
  .ticker span:last-child { margin-right: 5px; }
  .ticker b {
    font-weight: 400;
    font-size: 42px;
    line-height: 1;
    letter-spacing: 1.5px;
    margin-left: 1px;
  }
  .banner i {
    width: 2px;
    height: 36px;
    margin: 0 17px 0 19px;
    background: #e88a58;
  }

  .sections {
    height: 97px;
    border-top: 2px solid #d9d9d9;
    border-bottom: 2px solid #d9d9d9;
    display: flex;
    padding-left: 27px;
    flex: none;
  }
  .sections div {
    width: 146.3px;
    display: flex;
    flex-direction: column;
    align-items: center;
    padding-top: 22px;
    color: #666;
    font-size: 43px;
    line-height: 64px;
  }
  .sections .active { color: var(--orange); }
  .sections .active::after {
    content: "";
    width: 60px;
    height: 6px;
    margin-top: 2px;
    border-radius: 3px;
    background: var(--orange);
  }

  footer {
    flex: 1;
    background: var(--panel);
  }
  .dock {
    height: 165px;
    display: flex;
  }
  .index {
    width: 275px;
    display: flex;
    flex-direction: column;
    align-items: center;
    padding-top: 9px;
  }
  .index > .t { margin-top: 7px; }
  .index div {
    width: 235px;
    margin-left: 42px;
    display: flex;
    align-items: center;
    justify-content: space-between;
    padding-top: 1px;
  }
  .action {
    width: 201px;
    display: flex;
    flex-direction: column;
    align-items: center;
    padding-top: 9px;
    color: #666;
    font-size: 35px;
    line-height: 50px;
  }
  .action svg {
    fill: none;
    stroke: #666;
    stroke-width: 3;
  }
  .action span { margin-top: 15px; }
  .action .dots {
    fill: #666;
    stroke: none;
  }
  .gesture {
    display: flex;
    gap: 6px;
    padding-left: 120px;
  }
  .gesture i {
    width: 245px;
    height: 7px;
    background: #bbbcbe;
  }
  .gesture i:first-child { border-radius: 4px 0 0 4px; }
  .gesture i:nth-child(2) { width: 338px; }
  .gesture i:last-child { border-radius: 0 4px 4px 0; }
</style>
